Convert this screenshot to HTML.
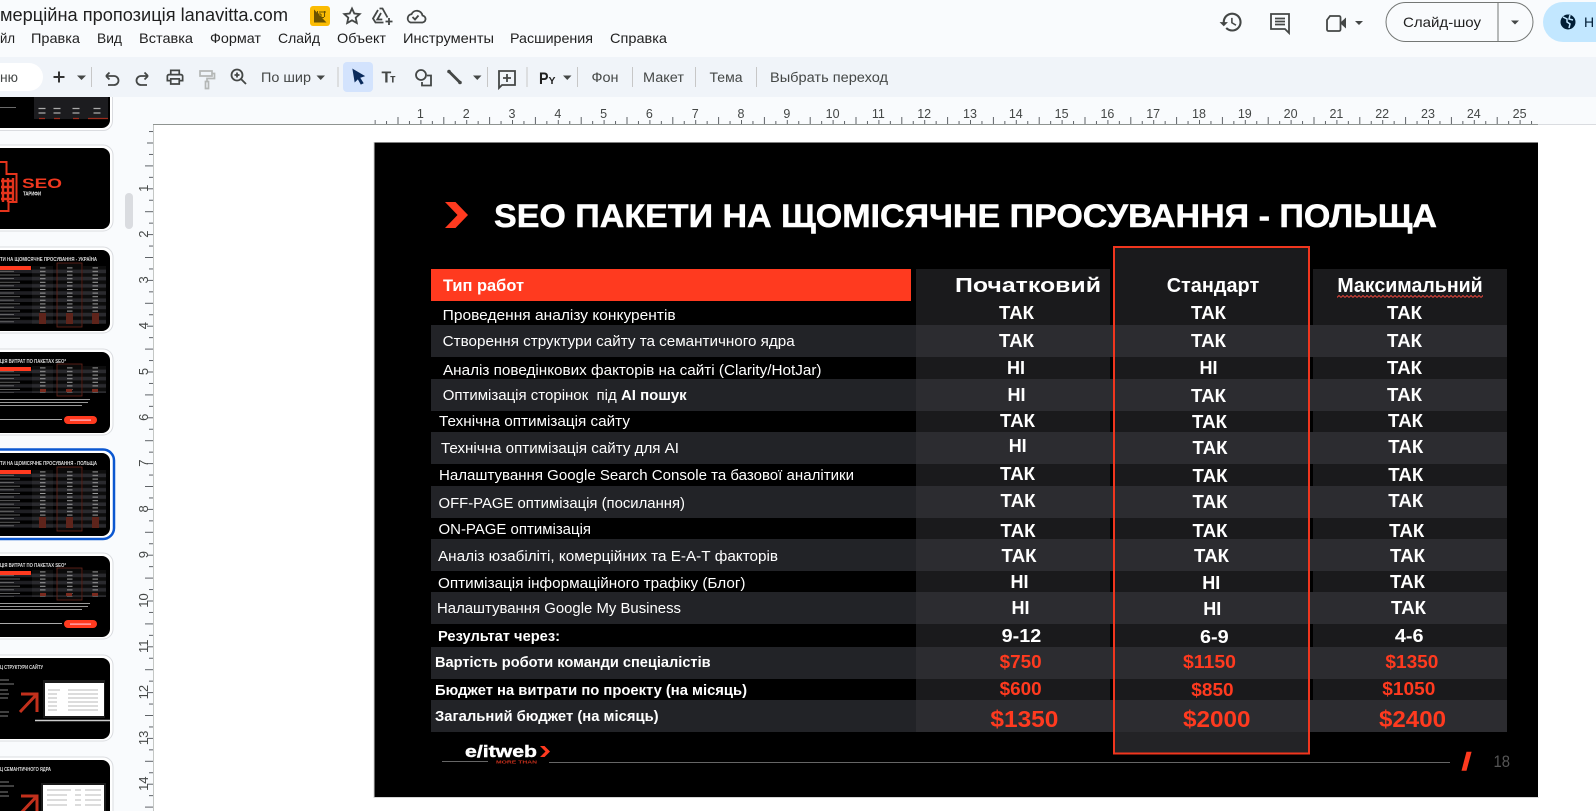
<!DOCTYPE html>
<html lang="uk"><head><meta charset="utf-8"><title>Slides</title>
<style>
html,body{margin:0;padding:0;background:#f9fbfd;overflow:hidden}
svg{display:block;font-family:"Liberation Sans","Noto Sans CJK SC",sans-serif}
text{white-space:pre}
.m{font-size:14px;fill:#1f1f1f}
.t{font-size:13.5px;fill:#444746}
.r{font-size:12.5px;fill:#444746;text-anchor:middle}
.l{font-size:15px;fill:#fff}
.b{font-size:15px;fill:#fff;font-weight:bold}
.h{font-size:20px;fill:#fff;font-weight:bold}
.v{font-size:18.5px;fill:#fff;font-weight:bold}
.p{font-size:18.5px;fill:#ff3a1f;font-weight:bold}
.q{font-size:23px;fill:#ff3a1f;font-weight:bold}
.i{fill:none;stroke:#444746;stroke-width:1.8}
.f{fill:#444746}
.tt{font-size:5px;fill:#ddd;font-weight:bold}
</style></head><body>
<svg width="1596" height="811" viewBox="0 0 1596 811" xmlns="http://www.w3.org/2000/svg">
<defs>
<pattern id="tk" x="374.6" y="114" width="45.8" height="10" patternUnits="userSpaceOnUse">
<path d="M.5 6V10M11.95 7V10M23.4 3V10M34.85 7V10" stroke="#5f6368" stroke-width="1" fill="none"/></pattern>
<pattern id="tl" x="143" y="142.5" width="10" height="45.8" patternUnits="userSpaceOnUse">
<path d="M4 .5H10M6 11.95H10M2 23.4H10M6 34.85H10" stroke="#5f6368" stroke-width="1" fill="none"/></pattern>
<pattern id="sq" x="1337" y="295" width="4" height="3" patternUnits="userSpaceOnUse">
<path d="M0 2.5L2 .5L4 2.5" stroke="#e0433a" stroke-width="1" fill="none"/></pattern>
<pattern id="rw" x="0" y="0" width="120" height="7.2" patternUnits="userSpaceOnUse">
<rect width="120" height="3.6" y="3.6" fill="#1f1f23"/>
<rect x="40" y="1.4" width="5.500" height="1" fill="#999"/><rect x="67" y="1.4" width="5.500" height="1" fill="#999"/><rect x="92.500" y="1.4" width="5.500" height="1" fill="#999"/>
<rect x="40" y="5" width="5.500" height="1" fill="#999"/><rect x="67" y="5" width="5.500" height="1" fill="#999"/><rect x="92.500" y="5" width="5.500" height="1" fill="#999"/>
<rect x="0" y="1.4" width="20" height=".8" fill="#777"/><rect x="0" y="5" width="14" height=".8" fill="#777"/>
</pattern>
<g id="tb">
<rect x="0" y="0" width="106" height="58" fill="url(#rw)"/>
<rect x="32" y="0" width="21" height="58" fill="#fff" opacity=".05"/>
<rect x="83" y="0" width="23" height="58" fill="#fff" opacity=".05"/>
<rect x="-2" y="0" width="33" height="4" fill="#ff3a1f"/>
<rect x="57" y="-3" width="25" height="64" fill="#fff" fill-opacity=".04" stroke="#6a2519" stroke-width=".8"/>
<rect x="39" y="47" width="7" height="11" fill="#5e241b"/><rect x="66" y="47" width="7" height="11" fill="#5e241b"/><rect x="92" y="47" width="7" height="11" fill="#5e241b"/>
</g>
<g id="ts">
<rect x="0" y="0" width="106" height="27" fill="url(#rw)"/>
<rect x="32" y="0" width="21" height="27" fill="#fff" opacity=".05"/>
<rect x="83" y="0" width="23" height="27" fill="#fff" opacity=".05"/>
<rect x="-2" y="1" width="33" height="4" fill="#ff3a1f"/>
<rect x="57" y="-2" width="25" height="32" fill="#fff" fill-opacity=".04" stroke="#6a2519" stroke-width=".8"/>
<rect x="40" y="23" width="6" height="3" fill="#7a2a1e"/><rect x="66" y="23" width="6" height="3" fill="#7a2a1e"/><rect x="92" y="23" width="6" height="3" fill="#7a2a1e"/>
<rect x="-2" y="33" width="92" height="1" fill="#999"/><rect x="-2" y="36" width="90" height="1" fill="#999"/><rect x="-2" y="39" width="84" height="1" fill="#999"/>
<rect x="-2" y="53" width="64" height="1" fill="#aaa"/>
<rect x="64" y="50" width="33" height="8" rx="4" fill="#ff3a1f"/><rect x="70" y="53.500" width="21" height="1.200" fill="#fbc"/>
</g>
<g id="ar"><path d="M21 2H37V20M37 2L20 20" fill="none" stroke="#c2301c" stroke-width="3"/></g>
</defs>

<rect width="1596" height="811" fill="#f9fbfd"/>
<rect y="57" width="1596" height="40" fill="#f0f4f9"/>

<!-- title bar -->
<text x="0" y="21" font-size="18" fill="#1f1f1f" textLength="288" lengthAdjust="spacingAndGlyphs">мерційна пропозиція lanavitta.com</text>
<rect x="310" y="6" width="20" height="20" rx="3" fill="#fbbc04"/>
<path d="M314 9.500L326.500 22.500H314Z" fill="#6a5200"/><path d="M314 14h7M314 17.500h10M317.500 11v11M321 14v8M319 12h7M324.500 11v6" stroke="#6a5200" stroke-width="1.100" fill="none"/>
<path d="M352 8.500l2.300 5 5.400.6-4 3.600 1.100 5.300-4.800-2.700-4.800 2.700 1.100-5.300-4-3.600 5.400-.6z" class="i" stroke-width="1.500"/>
<path d="M379.500 8.500h3l5 9M378 10l-5 8.500 2.500 4h8M381 13l-3.700 6.500h5" class="i" stroke-width="1.500"/>
<path d="M389 18v7M385.500 21.500h7" class="i" stroke-width="1.600"/>
<path d="M410.500 22.500h11a3.500 3.500 0 0 0 1-7 5.800 5.800 0 0 0-11-1.300 4.300 4.300 0 0 0-1 8.300z" class="i" stroke-width="1.500"/><path d="M412.500 17l2.500 2.500 3.500-4" class="i" stroke-width="1.400"/>

<!-- menu -->
<text x="0" y="43" class="m" textLength="15" lengthAdjust="spacingAndGlyphs">йл</text>
<text x="31" y="43" class="m" textLength="49" lengthAdjust="spacingAndGlyphs">Правка</text>
<text x="97" y="43" class="m" textLength="25" lengthAdjust="spacingAndGlyphs">Вид</text>
<text x="139" y="43" class="m" textLength="54" lengthAdjust="spacingAndGlyphs">Вставка</text>
<text x="210" y="43" class="m" textLength="51" lengthAdjust="spacingAndGlyphs">Формат</text>
<text x="278" y="43" class="m" textLength="42" lengthAdjust="spacingAndGlyphs">Слайд</text>
<text x="337" y="43" class="m" textLength="49" lengthAdjust="spacingAndGlyphs">Объект</text>
<text x="403" y="43" class="m" textLength="91" lengthAdjust="spacingAndGlyphs">Инструменты</text>
<text x="510" y="43" class="m" textLength="83" lengthAdjust="spacingAndGlyphs">Расширения</text>
<text x="610" y="43" class="m" textLength="57" lengthAdjust="spacingAndGlyphs">Справка</text>

<!-- top right -->
<g transform="translate(1218.500 9.500) scale(1.05)"><path fill="#444746" d="M13 3c-4.970 0-9 4.030-9 9H1l3.890 3.890.07.140L9 12H6c0-3.870 3.130-7 7-7s7 3.130 7 7-3.130 7-7 7c-1.930 0-3.680-.79-4.940-2.060l-1.420 1.420C8.270 19.990 10.510 21 13 21c4.970 0 9-4.030 9-9s-4.030-9-9-9zm-1 5v5l4.280 2.540.72-1.210-3.500-2.080V8H12z"/></g>
<path d="M1271 14h18v19l-4-4h-14z" class="i"/><path d="M1275 18.500h10M1275 21.500h10M1275 24.500h10" class="i" stroke-width="1.500"/>
<path d="M1330 16h9a1.500 1.500 0 0 1 1.500 1.500v12a1.500 1.500 0 0 1-1.500 1.500h-10.500a1.500 1.500 0 0 1-1.500-1.500V20z" class="i" stroke-width="2"/><path d="M1341 22l5-4.500v11l-5-4.500z" fill="#444746"/>
<path d="M1355 21h8l-4 4z" class="f"/>
<rect x="1386" y="2.500" width="147" height="39" rx="19.500" fill="#f9fbfd" stroke="#747775"/>
<path d="M1498 2.500v39" stroke="#747775"/>
<text x="1403" y="27" font-size="14" fill="#1f1f1f" textLength="78" lengthAdjust="spacingAndGlyphs">Слайд-шоу</text>
<path d="M1511 20.500h8l-4 4z" class="f"/>
<rect x="1543" y="2" width="90" height="40" rx="20" fill="#c2e7ff"/>
<circle cx="1568" cy="22" r="7.500" fill="#001d35"/><path d="M1563 17l4 2v3l3 2-1 4M1570 15l-1 4 4 1" stroke="#c2e7ff" stroke-width="1.500" fill="none"/>
<text x="1584" y="27" font-size="14" fill="#001d35">Н</text>

<!-- toolbar -->
<rect x="-20" y="63" width="63" height="28" rx="14" fill="#fff"/>
<text x="0" y="82" class="t" textLength="18" lengthAdjust="spacingAndGlyphs">ню</text>
<path d="M59 71.500v11M53.500 77h11" stroke="#333" stroke-width="2"/>
<path d="M77 75.500h9l-4.500 4.500z" class="f"/>
<path d="M91.500 67v20M338 67v20M487.500 67v20M527 67v20M577.500 67v20M632.500 67v20M695.500 67v20M756.500 67v20" stroke="#c7c7c7"/>
<path d="M106 76l3.500-3.500M106 76l3.500 3.500M106 76h8a4.500 4.500 0 0 1 0 9h-6" class="i" stroke-width="1.500"/>
<path d="M148 76l-3.500-3.500M148 76l-3.500 3.500M148 76h-7a4.500 4.500 0 0 0 0 9h6" class="i" stroke-width="1.500"/>
<g transform="translate(164.800 67) scale(.85)"><path fill="#444746" d="M19 8h-1V3H6v5H5c-1.660 0-3 1.340-3 3v6h4v4h12v-4h4v-6c0-1.660-1.340-3-3-3zM8 5h8v3H8V5zm8 12v2H8v-4h8v2zm2-2v-2H6v2H4v-4c0-.55.45-1 1-1h14c.55 0 1 .45 1 1v4h-2z"/></g>
<path d="M200 71h12v5h-12zM212 73.500h2.500v5h-7.500v3M205.500 81.500h3v7h-3z" fill="none" stroke="#b4b7b6" stroke-width="1.700"/>
<circle cx="237" cy="75" r="5.500" class="i" stroke-width="1.700"/><path d="M241 79l5 5M234.500 75h5M237 72.500v5" class="i" stroke-width="1.700"/>
<text x="261" y="82" class="t" textLength="50" lengthAdjust="spacingAndGlyphs">По шир</text>
<path d="M316.500 75.500h8.500l-4.300 4.500z" class="f"/>
<rect x="343" y="62" width="30" height="30" rx="4" fill="#d3e3fd"/>
<path d="M353 69.500l11 6.500-4.500 1.500 3.500 5.500-2 1-3-5.500-3 3z" fill="#0b2b5c" stroke="#0b2b5c" stroke-width="1"/>
<text x="381.500" y="82.500" font-size="16" font-weight="bold" fill="#444746">Т</text><text x="390" y="82.500" font-size="11.500" font-weight="bold" fill="#444746">т</text>
<circle cx="421" cy="75" r="5" class="i" stroke-width="1.500"/><path d="M427 75.500h4v10h-9v-3.500" class="i" stroke-width="1.500"/>
<path d="M449 71.500l11 11" stroke="#444746" stroke-width="2.800"/><circle cx="449" cy="71.500" r="1.800" class="f"/><circle cx="460" cy="82.500" r="1.800" class="f"/>
<path d="M473 75.500h8.500l-4.200 4.500z" class="f"/>
<path d="M499 71h16v14h-13l-3 3z" class="i" stroke-width="1.500"/><path d="M507 74v8M503 78h8" class="i" stroke-width="1.700"/>
<text x="539" y="84" font-size="17" font-weight="bold" fill="#1f1f1f" textLength="9.500" lengthAdjust="spacingAndGlyphs">P</text><text x="548.500" y="84" font-size="10.500" font-weight="bold" fill="#1f1f1f">Y</text>
<path d="M563 75.500h8.500l-4.200 4.500z" class="f"/>
<text x="591.500" y="82" class="t" textLength="27" lengthAdjust="spacingAndGlyphs">Фон</text>
<text x="643" y="82" class="t" textLength="41" lengthAdjust="spacingAndGlyphs">Макет</text>
<text x="709.500" y="82" class="t" textLength="33" lengthAdjust="spacingAndGlyphs">Тема</text>
<text x="770" y="82" class="t" textLength="118" lengthAdjust="spacingAndGlyphs">Выбрать переход</text>

<!-- canvas -->
<rect x="153" y="124" width="1443" height="687" fill="#fff"/>
<path d="M153.500 124v687" stroke="#c4c7c5"/>
<path d="M153 124.500H1538" stroke="#8f9491"/>
<path d="M1538 124.500H1596" stroke="#dadce0"/>
<rect x="374.600" y="114" width="1163" height="10" fill="url(#tk)"/>
<rect x="143" y="124" width="10" height="687" fill="url(#tl)"/>
<g>
<text class="r" x="420.400" y="118">1</text><text class="r" x="466.200" y="118">2</text><text class="r" x="512" y="118">3</text><text class="r" x="557.800" y="118">4</text><text class="r" x="603.600" y="118">5</text><text class="r" x="649.400" y="118">6</text><text class="r" x="695.200" y="118">7</text><text class="r" x="741" y="118">8</text><text class="r" x="786.800" y="118">9</text><text class="r" x="832.600" y="118">10</text><text class="r" x="878.400" y="118">11</text><text class="r" x="924.200" y="118">12</text><text class="r" x="970" y="118">13</text><text class="r" x="1015.800" y="118">14</text><text class="r" x="1061.600" y="118">15</text><text class="r" x="1107.400" y="118">16</text><text class="r" x="1153.200" y="118">17</text><text class="r" x="1199" y="118">18</text><text class="r" x="1244.800" y="118">19</text><text class="r" x="1290.600" y="118">20</text><text class="r" x="1336.400" y="118">21</text><text class="r" x="1382.200" y="118">22</text><text class="r" x="1428" y="118">23</text><text class="r" x="1473.800" y="118">24</text><text class="r" x="1519.600" y="118">25</text>
</g>
<g font-size="13" fill="#444746" text-anchor="middle">
<text transform="translate(148 188.300) rotate(-90)">1</text><text transform="translate(148 234.100) rotate(-90)">2</text><text transform="translate(148 279.900) rotate(-90)">3</text><text transform="translate(148 325.700) rotate(-90)">4</text><text transform="translate(148 371.500) rotate(-90)">5</text><text transform="translate(148 417.300) rotate(-90)">6</text><text transform="translate(148 463.100) rotate(-90)">7</text><text transform="translate(148 508.900) rotate(-90)">8</text><text transform="translate(148 554.700) rotate(-90)">9</text><text transform="translate(148 600.500) rotate(-90)">10</text><text transform="translate(148 646.300) rotate(-90)">11</text><text transform="translate(148 692.100) rotate(-90)">12</text><text transform="translate(148 737.900) rotate(-90)">13</text><text transform="translate(148 783.700) rotate(-90)">14</text>
</g>

<!-- thumbnails -->
<rect x="125" y="193" width="8" height="36" rx="4" fill="#dadce0"/>
<path d="M-20 97H113V121a10 10 0 0 1-10 10H-20z" fill="#fff"/>
<path d="M112.500 97V121a9.500 9.500 0 0 1-9.500 9.500H-20" fill="none" stroke="#dadce0"/>
<path d="M-20 97H110V120a8 8 0 0 1-8 8H-20z" fill="#000"/>
<rect x="34" y="97" width="74" height="22" fill="#1c1c1f"/>
<path d="M0 107.500h16" stroke="#999" stroke-width=".7"/>
<path d="M38.500 108.500h7M53.500 108.500h7M72.500 108.500h7M93.500 108.500h7M38.500 113h7M53.500 113h7M72.500 113h7M93.500 113h7" stroke="#aaa" stroke-width="1.300"/>
<path d="M39 118.500h6M54 118.500h6M73 118.500h6M88 118.500h20" stroke="#9c2c1d" stroke-width="1.300"/>

<rect x="-20" y="145" width="133" height="86" rx="10" fill="#fff" stroke="#dadce0"/>
<rect x="-20" y="148" width="130" height="81" rx="8" fill="#000"/>
<path d="M-2 162h8.500v12h10v28h-8v9H-2z" fill="none" stroke="#e5341c" stroke-width="2"/>
<path d="M1 181h12.500M1 187h12.500M1 193h12.500M1 199h12.500M3 178v24M8 178v24M13 178v24" stroke="#e5341c" stroke-width="2.400"/>
<text x="22" y="188" font-size="14" font-weight="bold" fill="#f0381f" textLength="40" lengthAdjust="spacingAndGlyphs">SEO</text>
<text x="23" y="195.500" font-size="5" font-weight="bold" fill="#eee" textLength="18" lengthAdjust="spacingAndGlyphs">ТАРИФИ</text>

<rect x="-20" y="247" width="133" height="86" rx="10" fill="#fff" stroke="#dadce0"/>
<rect x="-20" y="250" width="130" height="81" rx="8" fill="#000"/>
<text x="0" y="261" class="tt" textLength="97" lengthAdjust="spacingAndGlyphs">ТИ НА ЩОМІСЯЧНЕ ПРОСУВАННЯ - УКРАЇНА</text>
<use href="#tb" x="0" y="266"/>

<rect x="-20" y="349" width="133" height="86" rx="10" fill="#fff" stroke="#dadce0"/>
<rect x="-20" y="352" width="130" height="81" rx="8" fill="#000"/>
<text x="0" y="363" class="tt" textLength="66" lengthAdjust="spacingAndGlyphs">ЦІЯ ВИТРАТ ПО ПАКЕТАХ SEO*</text>
<use href="#ts" x="0" y="366"/>

<rect x="-20" y="449.500" width="134" height="89.500" rx="11" fill="#fff" stroke="#0b57d0" stroke-width="2.500"/>
<rect x="-20" y="453" width="130" height="83" rx="8" fill="#000"/>
<text x="0" y="465" class="tt" textLength="97" lengthAdjust="spacingAndGlyphs">ТИ НА ЩОМІСЯЧНЕ ПРОСУВАННЯ - ПОЛЬЩА</text>
<use href="#tb" x="0" y="470"/>

<rect x="-20" y="553" width="133" height="86" rx="10" fill="#fff" stroke="#dadce0"/>
<rect x="-20" y="556" width="130" height="81" rx="8" fill="#000"/>
<text x="0" y="567" class="tt" textLength="66" lengthAdjust="spacingAndGlyphs">ЦІЯ ВИТРАТ ПО ПАКЕТАХ SEO*</text>
<use href="#ts" x="0" y="570"/>

<rect x="-20" y="655" width="133" height="86" rx="10" fill="#fff" stroke="#dadce0"/>
<rect x="-20" y="658" width="130" height="81" rx="8" fill="#000"/>
<text x="0" y="669" class="tt" textLength="43" lengthAdjust="spacingAndGlyphs">Ц СТРУКТУРИ САЙТУ</text>
<path d="M0 680h9M0 684h14M0 690h8M0 694h9M0 698h8M0 712h9M0 716h8" stroke="#aaa" stroke-width=".8"/>
<use href="#ar" x="0" y="692"/>
<rect x="43" y="680" width="62" height="38" fill="#1a1a1a"/>
<rect x="45" y="683" width="59" height="33" fill="#fff"/>
<path d="M48 690h12M68 690h30M48 694h9M68 694h30M48 698h9M68 698h30M48 702h9M68 702h30M48 706h9M68 706h30M48 710h9M68 710h30" stroke="#c8c8c8" stroke-width="1.200"/>
<path d="M35 720.500H110" stroke="#ccc" stroke-width="1.500"/>

<rect x="-20" y="757" width="133" height="70" rx="10" fill="#fff" stroke="#dadce0"/>
<rect x="-20" y="760" width="130" height="60" rx="8" fill="#000"/>
<text x="0" y="771" class="tt" textLength="51" lengthAdjust="spacingAndGlyphs">Ц СЕМАНТИЧНОГО ЯДРА</text>
<path d="M0 782h9M0 786h14M0 792h8M0 796h9" stroke="#aaa" stroke-width=".8"/>
<use href="#ar" x="0" y="794"/>
<rect x="41" y="783" width="65" height="28" fill="#1a1a1a"/>
<rect x="43" y="785" width="61" height="26" fill="#fff"/>
<path d="M47 790h24M75 790h6M85 790h16M47 795h20M75 795h6M85 795h16M47 800h20M75 800h6M85 800h16M47 805h20M75 805h6M85 805h16" stroke="#c8c8c8" stroke-width="1.200"/>

<!-- slide -->
<rect x="374.500" y="142.500" width="1163.500" height="654.500" fill="#000"/>
<path d="M374 142v655.500h1164.500" fill="none" stroke="#d5d5d5"/>
<path d="M445 202h10.500L468 215l-12.500 13H445l12.500-13z" fill="#ff3a1f"/>
<text x="494" y="227" font-size="32" font-weight="bold" fill="#fff" stroke="#fff" stroke-width=".5" textLength="943" lengthAdjust="spacingAndGlyphs">SEO ПАКЕТИ НА ЩОМІСЯЧНЕ ПРОСУВАННЯ - ПОЛЬЩА</text>

<!-- table backgrounds -->
<g fill="#222327">
<rect x="431" y="325" width="485" height="32"/><rect x="431" y="379" width="485" height="32"/><rect x="431" y="432" width="485" height="32"/><rect x="431" y="486" width="485" height="32"/><rect x="431" y="539" width="485" height="32"/><rect x="431" y="592" width="485" height="32"/><rect x="431" y="647" width="485" height="32"/><rect x="431" y="700" width="485" height="32"/>
</g>
<rect x="431" y="269" width="480" height="32" fill="#ff3a1f"/>
<rect x="916" y="269" width="194" height="463" fill="#1a1a1c"/>
<rect x="1113" y="246" width="197" height="508" fill="#1a1a1c"/>
<rect x="1313" y="269" width="194" height="463" fill="#1a1a1c"/>
<g fill="#2c2c30">
<rect x="916" y="325" width="591" height="32"/><rect x="916" y="379" width="591" height="32"/><rect x="916" y="432" width="591" height="32"/><rect x="916" y="486" width="591" height="32"/><rect x="916" y="539" width="591" height="32"/><rect x="916" y="592" width="591" height="32"/><rect x="916" y="647" width="591" height="32"/><rect x="916" y="700" width="591" height="32"/>
</g>
<rect x="1113" y="732" width="197" height="22" fill="#232326"/>
<rect x="1114" y="247" width="195" height="506.500" fill="none" stroke="#f0361e" stroke-width="2"/>

<!-- left column -->
<text x="443" y="291" font-size="16.500" font-weight="bold" fill="#fff" textLength="81" lengthAdjust="spacingAndGlyphs">Тип работ</text>
<text x="442.700" y="320" class="l" textLength="233" lengthAdjust="spacingAndGlyphs">Проведення аналізу конкурентів</text>
<text x="442.700" y="346" class="l" textLength="352" lengthAdjust="spacingAndGlyphs">Створення структури сайту та семантичного ядра</text>
<text x="443" y="375" class="l" textLength="378.500" lengthAdjust="spacingAndGlyphs">Аналіз поведінкових факторів на сайті (Clarity/HotJar)</text>
<text x="442.700" y="400" class="l">Оптимізація сторінок  під <tspan font-weight="bold">AI пошук</tspan></text>
<text x="439" y="426" class="l" textLength="191" lengthAdjust="spacingAndGlyphs">Технічна оптимізація сайту</text>
<text x="441" y="453" class="l" textLength="238" lengthAdjust="spacingAndGlyphs">Технічна оптимізація сайту для AI</text>
<text x="439" y="480" class="l" textLength="415" lengthAdjust="spacingAndGlyphs">Налаштування Google Search Console та базової аналітики</text>
<text x="438.500" y="508" class="l" textLength="246.500" lengthAdjust="spacingAndGlyphs">OFF-PAGE оптимізація (посилання)</text>
<text x="438.500" y="534" class="l" textLength="152.500" lengthAdjust="spacingAndGlyphs">ON-PAGE оптимізація</text>
<text x="438" y="561" class="l" textLength="340" lengthAdjust="spacingAndGlyphs">Аналіз юзабіліті, комерційних та Е-А-Т факторів</text>
<text x="438" y="588" class="l" textLength="307.500" lengthAdjust="spacingAndGlyphs">Оптимізація інформаційного трафіку (Блог)</text>
<text x="437" y="613" class="l" textLength="244" lengthAdjust="spacingAndGlyphs">Налаштування Google My Business</text>
<text x="438" y="641" class="b" textLength="122" lengthAdjust="spacingAndGlyphs">Результат через:</text>
<text x="435" y="667" class="b" textLength="275.600" lengthAdjust="spacingAndGlyphs">Вартість роботи команди спеціалістів</text>
<text x="435" y="695" class="b" textLength="312" lengthAdjust="spacingAndGlyphs">Бюджет на витрати по проекту (на місяць)</text>
<text x="435" y="721" class="b" textLength="223.600" lengthAdjust="spacingAndGlyphs">Загальний бюджет (на місяць)</text>

<!-- headers -->
<text x="955" y="292" class="h" textLength="146" lengthAdjust="spacingAndGlyphs">Початковий</text>
<text x="1166.700" y="292" class="h" textLength="92.500" lengthAdjust="spacingAndGlyphs">Стандарт</text>
<text x="1337.400" y="292" class="h" textLength="145.300" lengthAdjust="spacingAndGlyphs">Максимальний</text>
<rect x="1337" y="295" width="146" height="3" fill="url(#sq)"/>

<!-- col 1 -->
<text class="v" x="999" y="319" textLength="35" lengthAdjust="spacingAndGlyphs">ТАК</text>
<text class="v" x="999" y="347" textLength="35" lengthAdjust="spacingAndGlyphs">ТАК</text>
<text class="v" x="1007" y="374" textLength="18" lengthAdjust="spacingAndGlyphs">НІ</text>
<text class="v" x="1007.500" y="401" textLength="18" lengthAdjust="spacingAndGlyphs">НІ</text>
<text class="v" x="1000" y="427" textLength="35" lengthAdjust="spacingAndGlyphs">ТАК</text>
<text class="v" x="1008.700" y="452" textLength="18" lengthAdjust="spacingAndGlyphs">НІ</text>
<text class="v" x="1000" y="480" textLength="35" lengthAdjust="spacingAndGlyphs">ТАК</text>
<text class="v" x="1000.500" y="507" textLength="35" lengthAdjust="spacingAndGlyphs">ТАК</text>
<text class="v" x="1000.500" y="537" textLength="35" lengthAdjust="spacingAndGlyphs">ТАК</text>
<text class="v" x="1001.500" y="562" textLength="35" lengthAdjust="spacingAndGlyphs">ТАК</text>
<text class="v" x="1010.500" y="588" textLength="18" lengthAdjust="spacingAndGlyphs">НІ</text>
<text class="v" x="1011.500" y="614" textLength="18" lengthAdjust="spacingAndGlyphs">НІ</text>
<text class="v" x="1001.700" y="642" textLength="39.500" lengthAdjust="spacingAndGlyphs">9-12</text>
<!-- col 2 -->
<text class="v" x="1191" y="319" textLength="35" lengthAdjust="spacingAndGlyphs">ТАК</text>
<text class="v" x="1191" y="347" textLength="35" lengthAdjust="spacingAndGlyphs">ТАК</text>
<text class="v" x="1199.500" y="374" textLength="18" lengthAdjust="spacingAndGlyphs">НІ</text>
<text class="v" x="1191" y="402" textLength="35" lengthAdjust="spacingAndGlyphs">ТАК</text>
<text class="v" x="1192" y="428" textLength="35" lengthAdjust="spacingAndGlyphs">ТАК</text>
<text class="v" x="1192.500" y="454" textLength="35" lengthAdjust="spacingAndGlyphs">ТАК</text>
<text class="v" x="1192.500" y="482" textLength="35" lengthAdjust="spacingAndGlyphs">ТАК</text>
<text class="v" x="1192.500" y="508" textLength="35" lengthAdjust="spacingAndGlyphs">ТАК</text>
<text class="v" x="1192.500" y="537" textLength="35" lengthAdjust="spacingAndGlyphs">ТАК</text>
<text class="v" x="1194" y="562" textLength="35" lengthAdjust="spacingAndGlyphs">ТАК</text>
<text class="v" x="1202.300" y="589" textLength="18" lengthAdjust="spacingAndGlyphs">НІ</text>
<text class="v" x="1203.300" y="615" textLength="18" lengthAdjust="spacingAndGlyphs">НІ</text>
<text class="v" x="1200" y="643" textLength="28.700" lengthAdjust="spacingAndGlyphs">6-9</text>
<!-- col 3 -->
<text class="v" x="1387" y="319" textLength="35" lengthAdjust="spacingAndGlyphs">ТАК</text>
<text class="v" x="1387" y="347" textLength="35" lengthAdjust="spacingAndGlyphs">ТАК</text>
<text class="v" x="1387" y="374" textLength="35" lengthAdjust="spacingAndGlyphs">ТАК</text>
<text class="v" x="1387" y="401" textLength="35" lengthAdjust="spacingAndGlyphs">ТАК</text>
<text class="v" x="1388" y="427" textLength="35" lengthAdjust="spacingAndGlyphs">ТАК</text>
<text class="v" x="1388.200" y="453" textLength="35" lengthAdjust="spacingAndGlyphs">ТАК</text>
<text class="v" x="1388.200" y="481" textLength="35" lengthAdjust="spacingAndGlyphs">ТАК</text>
<text class="v" x="1388.200" y="507" textLength="35" lengthAdjust="spacingAndGlyphs">ТАК</text>
<text class="v" x="1389.200" y="537" textLength="35" lengthAdjust="spacingAndGlyphs">ТАК</text>
<text class="v" x="1390" y="562" textLength="35" lengthAdjust="spacingAndGlyphs">ТАК</text>
<text class="v" x="1390" y="588" textLength="35" lengthAdjust="spacingAndGlyphs">ТАК</text>
<text class="v" x="1391" y="614" textLength="35" lengthAdjust="spacingAndGlyphs">ТАК</text>
<text class="v" x="1394.900" y="642" textLength="28.700" lengthAdjust="spacingAndGlyphs">4-6</text>
<!-- prices -->
<text class="p" x="999.600" y="668" textLength="42" lengthAdjust="spacingAndGlyphs">$750</text>
<text class="p" x="999.600" y="695" textLength="42" lengthAdjust="spacingAndGlyphs">$600</text>
<text class="q" x="990.400" y="727" textLength="68" lengthAdjust="spacingAndGlyphs">$1350</text>
<text class="p" x="1183" y="668" textLength="53" lengthAdjust="spacingAndGlyphs">$1150</text>
<text class="p" x="1191.300" y="696" textLength="42.300" lengthAdjust="spacingAndGlyphs">$850</text>
<text class="q" x="1183" y="727" textLength="67.500" lengthAdjust="spacingAndGlyphs">$2000</text>
<text class="p" x="1385.400" y="668" textLength="53" lengthAdjust="spacingAndGlyphs">$1350</text>
<text class="p" x="1382.300" y="695" textLength="53" lengthAdjust="spacingAndGlyphs">$1050</text>
<text class="q" x="1379" y="727" textLength="67" lengthAdjust="spacingAndGlyphs">$2400</text>

<!-- footer -->
<text x="465" y="757" font-size="17" font-weight="bold" fill="#fff" stroke="#fff" stroke-width=".4" textLength="72" lengthAdjust="spacingAndGlyphs">e/itweb</text>
<path d="M540 746h4.500l5.500 5.500-5.500 5.500H540l5.500-5.500z" fill="#ff3a1f"/>
<text x="496" y="763.500" font-size="4.500" font-weight="bold" fill="#c9301c" textLength="41" lengthAdjust="spacingAndGlyphs">MORE THAN</text>
<path d="M442 761.500h46M549 762.500H1450" stroke="#666" stroke-width="1"/>
<path d="M1466.500 751.700h5.100l-5.100 19h-5z" fill="#ff3a1f"/>
<text x="1493.500" y="767" font-size="17" fill="#555" textLength="16.500" lengthAdjust="spacingAndGlyphs">18</text>
</svg>
</body></html>
